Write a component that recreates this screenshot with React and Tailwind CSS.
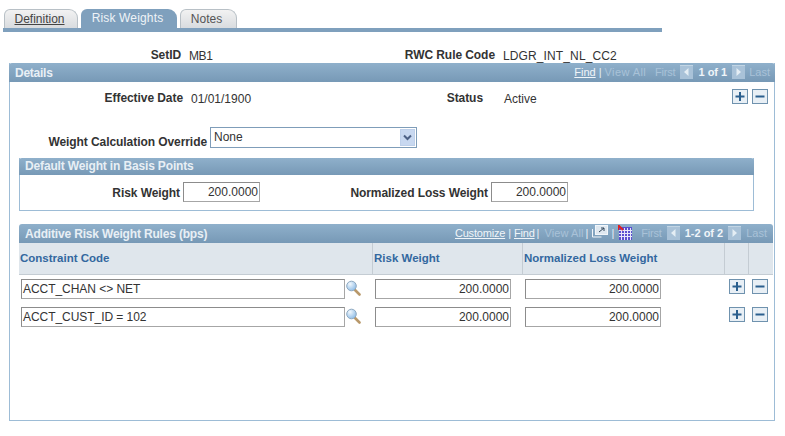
import React from 'react';

const headerBg = 'bg-gradient-to-b from-[#8fb0cb] to-[#7799b6]';

const Arrow = ({ dir }) => (
  <svg width="13" height="14" viewBox="0 0 13 14" className="shrink-0 mb-[2px]">
    <rect x="0" y="0" width="13" height="14" fill="#a9c2d8" />
    <rect x="0" y="0" width="13" height="1" fill="#c2d5e4" />
    <path d={dir === 'left' ? 'M8.5 3v8L4 7z' : 'M4.5 3v8L9 7z'} fill="#e4edf4" />
  </svg>
);

const AddDelete = ({ kind }) => (
  <svg width="16" height="15" viewBox="0 0 16 15" className="shrink-0">
    <rect x="0.5" y="0.5" width="15" height="14" fill="#e8eff5" stroke="#6f92ae" />
    {kind === 'add' ? (
      <path d="M3.5 7.5h9M8 3v9" stroke="#2b5f8e" strokeWidth="2" />
    ) : (
      <path d="M3.5 7.5h9" stroke="#2b5f8e" strokeWidth="2" />
    )}
  </svg>
);

const Lens = () => (
  <svg width="15" height="16" viewBox="0 0 15 16" className="shrink-0">
    <defs>
      <radialGradient id="lensfill" cx="0.35" cy="0.3" r="0.8">
        <stop offset="0" stopColor="#f2f8fd" />
        <stop offset="1" stopColor="#86b8e6" />
      </radialGradient>
    </defs>
    <path d="M9 10l4.5 4.5" stroke="#b8986a" strokeWidth="2.6" strokeLinecap="round" />
    <circle cx="5.5" cy="6" r="4.8" fill="url(#lensfill)" stroke="#8fa9c0" />
  </svg>
);

const NumberBox = ({ className }) => (
  <div
    className={
      'h-[20px] border border-[#a6a6a6] border-l-[#8c8c8c] border-t-[#8c8c8c] bg-white text-right pr-[1px] leading-[18px] text-[#333] ' +
      className
    }
  >
    200.0000
  </div>
);

const Label = ({ className, children }) => (
  <div className={'font-bold text-right text-[#333] tracking-[-0.07px] ' + className}>{children}</div>
);

const rows = ['ACCT_CHAN <> NET', 'ACCT_CUST_ID = 102'];

const App = () => {
  return (
    <div className="w-[785px] h-[436px] overflow-hidden bg-white text-[12px] font-['Liberation_Sans',Arial,sans-serif]">
      {/* tabs */}
      <div className="flex items-end h-[28px] pl-[4px] gap-[3px]">
        <div className="w-[74px] h-[19px] pr-[3px] rounded-tl-[6px] rounded-tr-[9px] border border-b-0 border-[#b8c0c6] bg-gradient-to-b from-[#f2f2f2] to-[#d9dcdf] text-center leading-[19px] text-[#444] underline">
          Definition
        </div>
        <div className="w-[96px] h-[19px] pr-[3px] rounded-tl-[6px] rounded-tr-[9px] bg-[#7fa0bd] text-center leading-[19px] text-[#eef3f7] tracking-[0.15px]">
          Risk Weights
        </div>
        <div className="w-[57px] h-[19px] pr-[4px] rounded-tl-[6px] rounded-tr-[9px] border border-b-0 border-[#b8c0c6] bg-gradient-to-b from-[#f2f2f2] to-[#d9dcdf] text-center leading-[19px] text-[#555]">
          Notes
        </div>
      </div>
      <div className="w-[659px] h-[4px] ml-[3px] bg-[#7fa0bd]" />

      {/* key row */}
      <div className="flex h-[31px] items-start pt-[15px] leading-[16px]">
        <Label className="w-[181px]">SetID</Label>
        <div className="w-[314px] pl-[8px] pt-[1px] text-[#333] tracking-[-0.4px]">MB1</div>
        <Label className="w-[0px] flex justify-end whitespace-nowrap">RWC Rule Code</Label>
        <div className="pl-[8px] pt-[1px] text-[#333] tracking-[0.12px]">LDGR_INT_NL_CC2</div>
      </div>

      {/* details */}
      <div className="ml-[9px] w-[766px] h-[358px] border border-t-0 border-[#9dbcd6]">
        <div className={'-mx-[1px] h-[19px] rounded-t-[3px] flex items-center justify-between pl-[6px] pr-[5px] ' + headerBg}>
          <span className="font-bold text-[#e8eff5] tracking-[-0.25px]">Details</span>
          <div className="flex items-center text-[11px] text-[#a9c2d8] whitespace-nowrap">
            <span className="text-[#f0f5f9] underline">Find</span>
            <span className="text-[#e8eff5] mx-[3px]">|</span>
            <span className="tracking-[0.4px]">View All</span>
            <span className="ml-[9px] -tracking-[0.2px]">First</span>
            <span className="ml-[5px] flex"><Arrow dir="left" /></span>
            <span className="mx-[5px] font-bold text-[#f0f5f9]">1 of 1</span>
            <Arrow dir="right" />
            <span className="ml-[4px]">Last</span>
          </div>
        </div>

        <div className="flex items-start h-[45px] pt-[7px]">
          <Label className="w-[173px] leading-[16px] pt-[1px]">Effective Date</Label>
          <div className="w-[300px] pl-[8px] pt-[2px] leading-[16px] text-[#333]">01/01/1900</div>
          <Label className="flex justify-end w-0 whitespace-nowrap leading-[16px] pt-[1px]">Status</Label>
          <div className="w-[249px] pl-[21px] pt-[2px] leading-[16px] text-[#333]">Active</div>
          <div className="flex gap-[4px]">
            <AddDelete kind="add" />
            <AddDelete kind="del" />
          </div>
        </div>

        <div className="flex items-start h-[31px]">
          <Label className="w-[197px] whitespace-nowrap pt-[7px] leading-[16px]">Weight Calculation Override</Label>
          <div className="ml-[3px] w-[207px] h-[21px] border border-[#7f9db9] flex items-center justify-between pl-[3px] text-[#333]">
            <span className="pb-[1px]">None</span>
            <svg width="15" height="17" viewBox="0 0 15 17" className="mr-[1px]">
              <rect x="0" y="0" width="15" height="17" rx="1" fill="#c8d8f0" stroke="#b4c8e4" />
              <path d="M4 6.5l3.5 3.5L11 6.5" fill="none" stroke="#4d6185" strokeWidth="2" />
            </svg>
          </div>
        </div>

        {/* default weight */}
        <div className="ml-[9px] w-[735px] h-[53px] border border-t-0 border-[#9dbcd6]">
          <div className={'-mx-[1px] h-[17px] rounded-t-[3px] pl-[6px] leading-[17px] font-bold text-[#e8eff5] tracking-[-0.15px] ' + headerBg}>
            Default Weight in Basis Points
          </div>
          <div className="flex items-start pt-[7px]">
            <Label className="w-[160px] pt-[3px] leading-[16px]">Risk Weight</Label>
            <NumberBox className="ml-[3px] w-[77px]" />
            <Label className="w-[228px] pt-[3px] leading-[16px]">Normalized Loss Weight</Label>
            <NumberBox className="ml-[3px] w-[77px]" />
          </div>
        </div>

        {/* additive rules grid */}
        <div className="ml-[9px] mt-[13px] w-[754px]">
          <div className={'h-[19px] rounded-t-[3px] flex items-center justify-between pl-[6px] pr-[6px] ' + headerBg}>
            <span className="font-bold text-[#e8eff5] tracking-[-0.17px]">Additive Risk Weight Rules (bps)</span>
            <div className="flex items-center text-[11px] text-[#a9c2d8] whitespace-nowrap">
              <span className="text-[#f0f5f9] underline -tracking-[0.2px]">Customize</span>
              <span className="text-[#e8eff5] mx-[3px]">|</span>
              <span className="text-[#f0f5f9] underline -tracking-[0.2px]">Find</span>
              <span className="text-[#e8eff5] mx-[2px]">|</span>
              <span className="tracking-[0.1px] ml-[3px]">View All</span>
              <span className="text-[#e8eff5] mx-[2px]">|</span>
              <svg width="16" height="14" viewBox="0 0 16 14" className="mb-[3px] ml-[2px]">
                <rect x="3.5" y="0.5" width="12" height="9" fill="#dfe8f0" stroke="#f2f6fa" />
                <path d="M7 7l5-4M9 3h3v3" fill="none" stroke="#33475a" />
                <path d="M0.5 4v8h9" fill="none" stroke="#f2f6fa" />
              </svg>
              <span className="text-[#e8eff5] mx-[3px]">|</span>
              <svg width="14" height="15" viewBox="0 0 14 15" className="mb-[3px] ml-[1px]">
                <rect x="1" y="2" width="13" height="13" fill="#5a4fd0" />
                <path d="M3.5 3v12M6.5 3v12M9.5 3v12M12.5 3v12M1 5.5h13M1 8.5h13M1 11.5h13" stroke="#e6e6fa" />
                <path d="M0 0l5 5M0 5V1" stroke="#e02020" strokeWidth="2" fill="none" />
              </svg>
              <span className="ml-[9px] -tracking-[0.2px]">First</span>
              <span className="ml-[5px] flex"><Arrow dir="left" /></span>
              <span className="mx-[5px] font-bold text-[#f0f5f9]">1-2 of 2</span>
              <Arrow dir="right" />
              <span className="ml-[5px]">Last</span>
            </div>
          </div>

          <div className="grid grid-cols-[353px_150px_202px_24px_25px] h-[32px] bg-[#dfe6ec] border-b border-[#c4ccd3] font-bold text-[11.5px] text-[#33689f] leading-[30px]">
            <div className="pl-[1px]">Constraint Code</div>
            <div className="pl-[1px] border-l border-[#c4ccd3]">Risk Weight</div>
            <div className="pl-[1px] border-l border-[#c4ccd3]">Normalized Loss Weight</div>
            <div className="border-l border-[#c4ccd3]" />
            <div className="border-l border-[#c4ccd3]" />
          </div>

          <div className="pt-[4px] flex flex-col gap-[8px]">
            {rows.map(code => (
              <div key={code} className="flex items-start h-[20px]">
                <div className="ml-[2px] w-[324px] h-[20px] border border-[#a6a6a6] border-l-[#8c8c8c] border-t-[#8c8c8c] pl-[1px] leading-[18px] text-[#333] -tracking-[0.05px]">
                  {code}
                </div>
                <span className="ml-[1px] mt-[1px]"><Lens /></span>
                <NumberBox className="ml-[14px] w-[136px]" />
                <NumberBox className="ml-[14px] w-[136px]" />
                <div className="ml-[68px] flex gap-[7px]">
                  <AddDelete kind="add" />
                  <AddDelete kind="del" />
                </div>
              </div>
            ))}
          </div>
        </div>
      </div>
    </div>
  );
};

export default App;
